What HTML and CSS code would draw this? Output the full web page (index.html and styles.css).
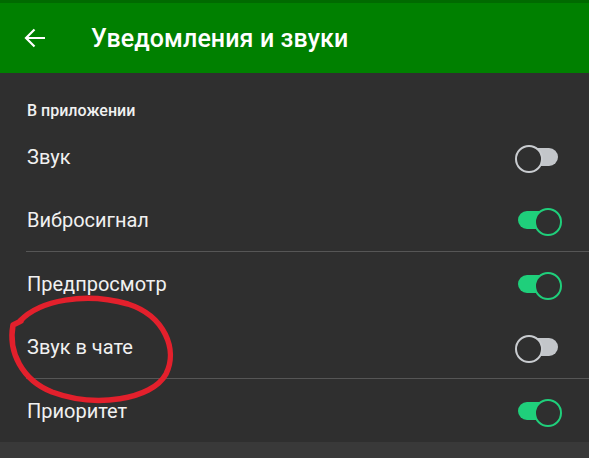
FILE: index.html
```html
<!DOCTYPE html>
<html lang="ru">
<head>
    <meta charset="UTF-8">
    <meta name="viewport" content="width=device-width, initial-scale=1.0">
    <title>Уведомления и звуки</title>
    <link rel="stylesheet" href="styles.css">
</head>
<body>
    <div class="status"></div>

    <!-- шапка -->
    <div class="topbar">
        <svg class="back" width="22" height="20" viewBox="0 0 22 20">
            <path d="M21 10H2M10.5 1.5L2 10l8.5 8.5" fill="none" stroke="#fff" stroke-width="2.2"/>
        </svg>
        <h1>Уведомления и звуки</h1>
    </div>

    <div class="content">
        <div class="group">
            <div class="section-title">В приложении</div>
            <div class="row"><span>Звук</span><span class="switch"></span></div>
            <div class="row"><span>Вибросигнал</span><span class="switch on"></span></div>
        </div>
        <div class="group">
            <div class="row"><span>Предпросмотр</span><span class="switch on"></span></div>
            <div class="row"><span>Звук в чате</span><span class="switch"></span></div>
        </div>
        <div class="group">
            <div class="row"><span>Приоритет</span><span class="switch on"></span></div>
        </div>
        <div class="footer"></div>

        <!-- пометка красным -->
        <svg class="mark" width="589" height="458" viewBox="0 0 589 458">
            <path d="M20 321 C40 300 85 292 128 304 C165 316 178 350 166 374 C152 400 95 408 52 392 C22 380 8 352 13 325 L21 321"
                  fill="none" stroke="#e3202c" stroke-width="5.5" stroke-linecap="round" stroke-linejoin="round"/>
        </svg>
    </div>
</body>
</html>
```

FILE: styles.css
```css
* { margin: 0; padding: 0; box-sizing: border-box; }
body { width: 589px; height: 458px; overflow: hidden; background: #2f2f2f; font-family: Roboto, "Noto Sans", sans-serif; color: #f1f1f1; position: relative; }
.status { height: 3px; background: #006a00; }
.topbar { height: 70px; background: #008000; display: flex; align-items: center; padding-left: 24px; }
.back { margin-right: 45px; }
.topbar h1 { font-size: 25px; font-weight: 500; color: #fff; letter-spacing: 0.1px; }
.group + .group { border-top: 1px solid #565656; margin-left: 26px; }
.group + .group .row { margin-left: -26px; }
.section-title { height: 52px; padding: 28px 27px 0; font-size: 16px; font-weight: 500; line-height: 19px; }
.row { height: 63px; display: flex; align-items: center; justify-content: space-between; padding: 0 27px; font-size: 20px; }
.footer { height: 20px; background: #393939; }
.switch { width: 47px; height: 24px; position: relative; }
.switch::before { content: ""; position: absolute; left: 3px; right: 4px; top: 3px; height: 18px; border-radius: 9px; background: #c3c6ca; }
.switch::after { content: ""; position: absolute; left: 0; top: 0; width: 24px; height: 24px; border-radius: 50%; border: 2.5px solid #c9ccd0; background: #2f2f2f; }
.switch.on::before { background: #1fcf7b; }
.switch.on::after { left: auto; right: 0; border-color: #1fcf7b; }
.mark { position: absolute; left: 0; top: 0; pointer-events: none; }
```
